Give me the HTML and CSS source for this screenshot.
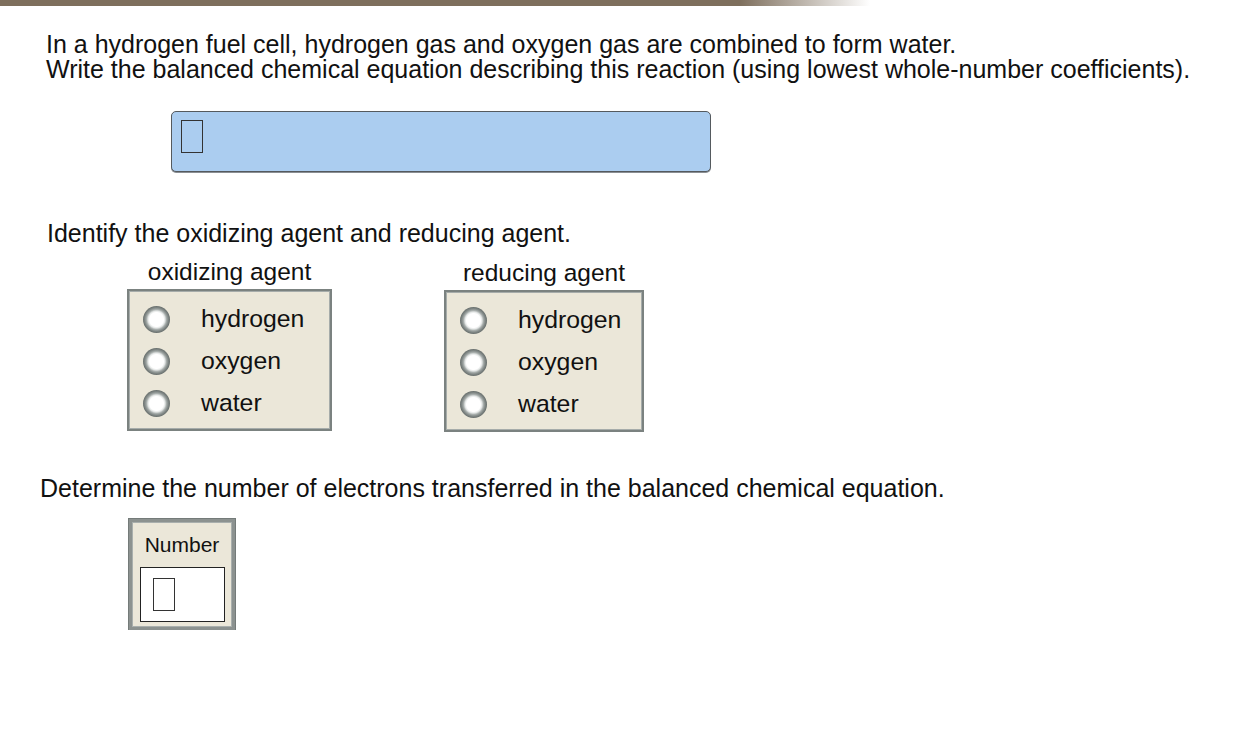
FILE: index.html
```html
<!DOCTYPE html>
<html lang="en">
<head>
    <meta charset="UTF-8">
    <title>Hydrogen Fuel Cell</title>
    <link rel="stylesheet" href="styles.css">
</head>
<body>

    <!-- header strip -->
    <div class="top-strip"></div>

    <p class="prompt">
        In a hydrogen fuel cell, hydrogen gas and oxygen gas are combined to form water.<br>
        Write the balanced chemical equation describing this reaction (using lowest whole-number coefficients).
    </p>

    <div class="equation-box">
        <div class="blank"></div>
    </div>

    <p class="prompt identify">Identify the oxidizing agent and reducing agent.</p>

    <div class="agents">
        <div class="agent-col oxidizing">
            <div class="agent-title">oxidizing agent</div>
            <div class="choice-box">
                <label class="choice"><span class="radio"></span>hydrogen</label>
                <label class="choice"><span class="radio"></span>oxygen</label>
                <label class="choice"><span class="radio"></span>water</label>
            </div>
        </div>
        <div class="agent-col reducing">
            <div class="agent-title">reducing agent</div>
            <div class="choice-box">
                <label class="choice"><span class="radio"></span>hydrogen</label>
                <label class="choice"><span class="radio"></span>oxygen</label>
                <label class="choice"><span class="radio"></span>water</label>
            </div>
        </div>
    </div>

    <p class="prompt determine">Determine the number of electrons transferred in the balanced chemical equation.</p>

    <div class="number-box">
        <div class="number-label">Number</div>
        <div class="number-input">
            <div class="blank"></div>
        </div>
    </div>

</body>
</html>
```

FILE: styles.css
```css
body {
    margin: 0;
    font-family: "Liberation Sans", Arial, sans-serif;
    color: #111;
    background: #fff;
}

.top-strip {
    height: 6px;
    width: 870px;
    background: linear-gradient(to right, #7e6f5d 0%, #7e6f5d 85%, #ffffff 100%);
}

.prompt {
    margin: 26px 0 0 46px;
    font-size: 25px;
    line-height: 25px;
}

.equation-box {
    margin: 29px 0 0 171px;
    width: 538px;
    height: 59px;
    background: #abcdf0;
    border: 1px solid #555a5e;
    border-radius: 5px;
    box-shadow: 0 1px 0 #8a8f94;
}

.equation-box .blank {
    margin: 8px 0 0 9px;
}

.blank {
    width: 20px;
    height: 31px;
    border: 1px solid #333;
}

.identify {
    margin-top: 49px;
    margin-left: 47px;
}

.agents {
    display: flex;
    gap: 112px;
    margin: 13px 0 0 127px;
}

.agent-col {
    display: flex;
    flex-direction: column;
    align-items: center;
}

.oxidizing {
    width: 205px;
}

.reducing {
    width: 200px;
    margin-top: 1px;
}

.agent-title {
    font-size: 24.5px;
    line-height: 25px;
    margin-bottom: 5px;
}

.choice-box {
    align-self: stretch;
    background: #ebe7d9;
    border: 2px solid #7b8280;
    box-shadow: inset 0 0 0 1px #a6acaa;
    padding: 7px 0 5px 0;
}

.choice {
    display: flex;
    align-items: center;
    height: 42px;
    padding-left: 14px;
    font-size: 24.8px;
}

/* radio button: white core with a shaded grey ring */
.radio {
    width: 27px;
    height: 27px;
    margin-right: 31px;
    border-radius: 50%;
    background: radial-gradient(circle closest-side, #ffffff 0, #ffffff 7px, #e4e7e6 8.5px, #a8aeac 10px, #858c8a 11.5px, #666d6b 13.5px);
}

.determine {
    margin-top: 44px;
    margin-left: 40px;
}

.number-box {
    margin: 18px 0 0 129px;
    width: 100px;
    height: 105px;
    background: #ebe7d9;
    border: 3px solid #8c9290;
    box-shadow: inset 0 0 0 1px #a9afad, 0 0 0 1px #747b79;
}

.number-label {
    font-size: 21px;
    line-height: 24px;
    text-align: center;
    padding-top: 11px;
}

.number-input {
    margin: 10px 0 0 8px;
    width: 83px;
    height: 53px;
    background: #fff;
    border: 1px solid #222;
}

.number-input .blank {
    margin: 10px 0 0 12px;
}
```
